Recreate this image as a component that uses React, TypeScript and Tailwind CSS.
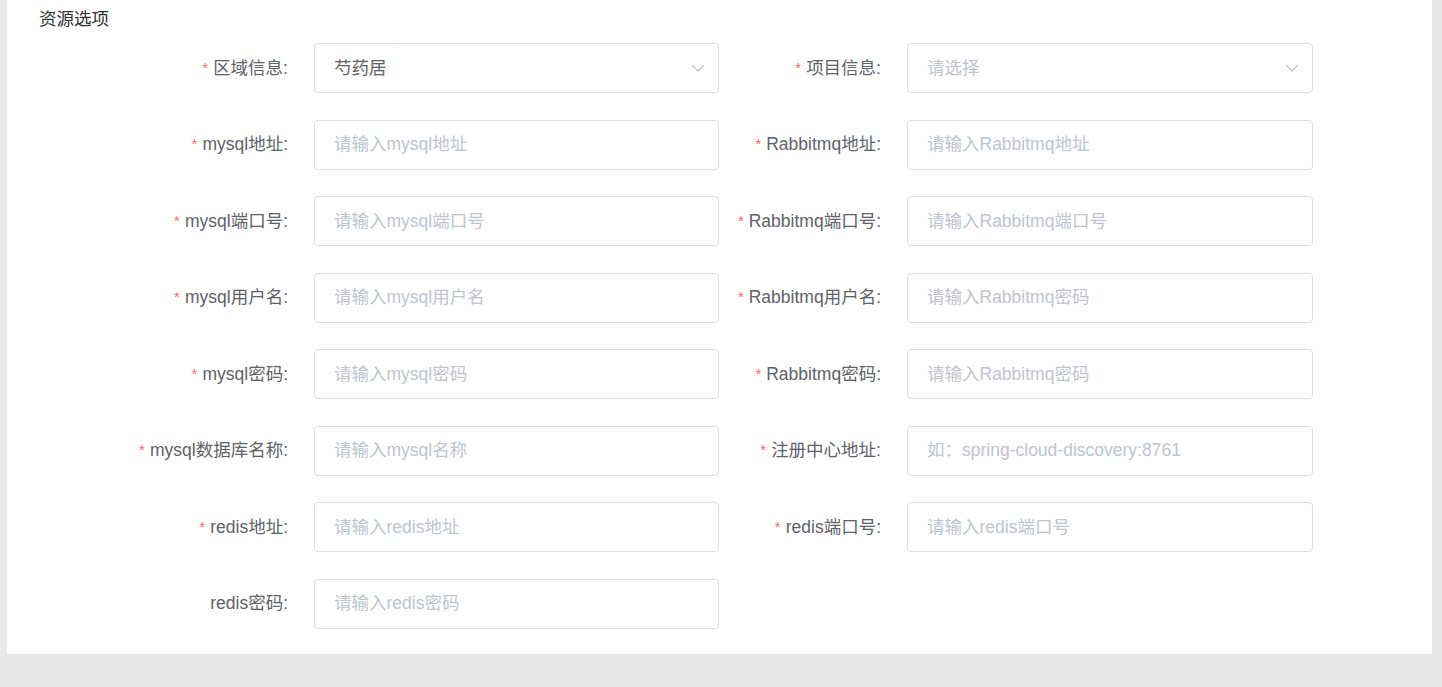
import React from "react";

type Field = {
  label: string;
  required?: boolean;
  placeholder?: string;
  value?: string;
  select?: boolean;
};

// linha a linha: [coluna esquerda, coluna direita]
const ROWS: [Field, Field | null][] = [
  [
    { label: "区域信息:", required: true, select: true, value: "芍药居" },
    { label: "项目信息:", required: true, select: true, placeholder: "请选择" },
  ],
  [
    { label: "mysql地址:", required: true, placeholder: "请输入mysql地址" },
    { label: "Rabbitmq地址:", required: true, placeholder: "请输入Rabbitmq地址" },
  ],
  [
    { label: "mysql端口号:", required: true, placeholder: "请输入mysql端口号" },
    { label: "Rabbitmq端口号:", required: true, placeholder: "请输入Rabbitmq端口号" },
  ],
  [
    { label: "mysql用户名:", required: true, placeholder: "请输入mysql用户名" },
    { label: "Rabbitmq用户名:", required: true, placeholder: "请输入Rabbitmq密码" },
  ],
  [
    { label: "mysql密码:", required: true, placeholder: "请输入mysql密码" },
    { label: "Rabbitmq密码:", required: true, placeholder: "请输入Rabbitmq密码" },
  ],
  [
    { label: "mysql数据库名称:", required: true, placeholder: "请输入mysql名称" },
    { label: "注册中心地址:", required: true, placeholder: "如：spring-cloud-discovery:8761" },
  ],
  [
    { label: "redis地址:", required: true, placeholder: "请输入redis地址" },
    { label: "redis端口号:", required: true, placeholder: "请输入redis端口号" },
  ],
  [{ label: "redis密码:", placeholder: "请输入redis密码" }, null],
];

const FONT = "font-['Liberation_Sans','Noto_Sans_CJK_SC',sans-serif]";

export default function App() {
  return (
    <div className={`min-h-screen bg-[#e8e8e8] pl-[7px] pr-[10px] pb-[33px] ${FONT}`}>
      <div className="bg-white pt-[7px] pb-[25px]">
        <h2 className="pl-[32px] text-[17.5px] leading-[24px] text-[#303133]">资源选项</h2>

        {/* Formulário */}
        <div className="mt-[12px] grid grid-cols-[281px_405px_136px_406px] gap-x-[26px] gap-y-[26.5px]">
          {ROWS.map(([a, b], i) => (
            <React.Fragment key={i}>
              <Label f={a} />
              <Control f={a} />
              {b ? (
                <>
                  <Label f={b} />
                  <Control f={b} />
                </>
              ) : (
                <>
                  <div />
                  <div />
                </>
              )}
            </React.Fragment>
          ))}
        </div>
      </div>
    </div>
  );
}

function Label({ f }: { f: Field }) {
  return (
    <div className="flex h-[50px] items-center justify-end whitespace-nowrap text-[17.5px] text-[#606266]">
      {f.required && <span className="mr-[5px] text-[15px] text-[#f56c6c]">*</span>}
      {f.label}
    </div>
  );
}

function Control({ f }: { f: Field }) {
  if (f.select) {
    return (
      <div className="flex h-[50px] items-center justify-between rounded-[4px] border border-[#dcdfe6] pl-[19px] pr-[13px] text-[17.5px]">
        {f.value ? (
          <span className="text-[#606266]">{f.value}</span>
        ) : (
          <span className="text-[#c0c4cc]">{f.placeholder}</span>
        )}
        <svg width="14" height="14" viewBox="0 0 14 14" fill="none">
          <polyline
            points="1.5,4.5 7,10 12.5,4.5"
            stroke="#c0c4cc"
            strokeWidth="1.3"
            strokeLinecap="round"
            strokeLinejoin="round"
          />
        </svg>
      </div>
    );
  }
  return (
    <input
      className="h-[50px] w-full rounded-[4px] border border-[#dcdfe6] px-[19px] text-[17.5px] text-[#606266] outline-none placeholder:text-[#c0c4cc]"
      placeholder={f.placeholder}
    />
  );
}
